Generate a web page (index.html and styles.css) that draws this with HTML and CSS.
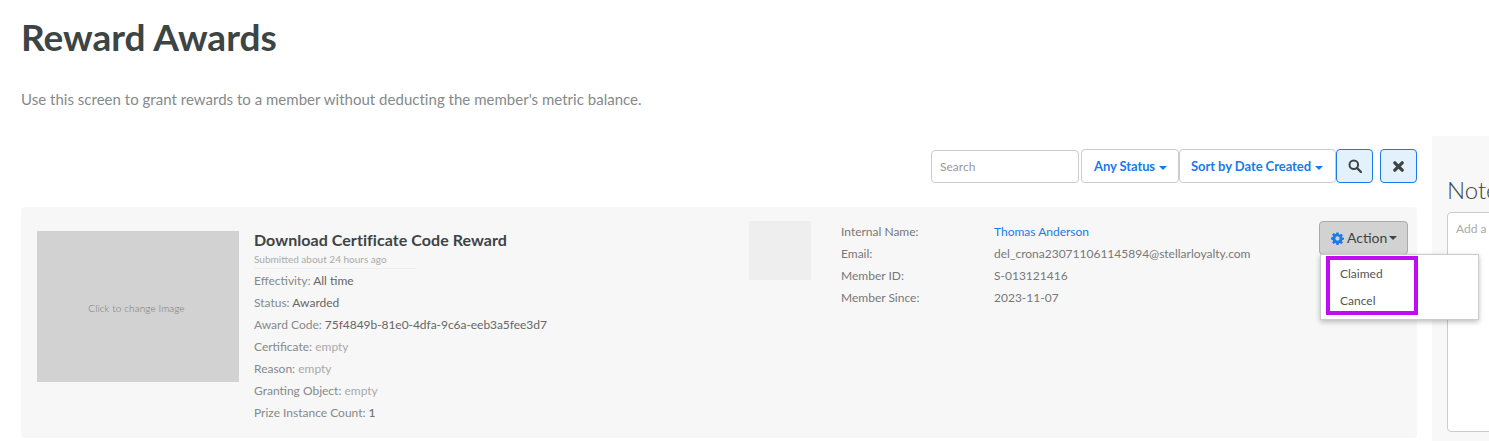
FILE: index.html
```html
<!DOCTYPE html>
<html lang="en">
<head>
    <meta charset="UTF-8">
    <title>Reward Awards</title>
    <link rel="stylesheet" href="styles.css">
</head>
<body>
    <h1>Reward Awards</h1>
    <p class="intro">Use this screen to grant rewards to a member without deducting the member's metric balance.</p>

    <div class="layout">
        <div class="main">
            <div class="toolbar">
                <input class="search" type="text" placeholder="Search">
                <button class="filter status-filter">Any Status<span class="caret"></span></button>
                <button class="filter sort-filter">Sort by Date Created<span class="caret"></span></button>
                <button class="icon-btn search-btn" aria-label="Search">
                    <svg width="14" height="14" viewBox="0 0 14 14"><circle cx="5.8" cy="5.8" r="4.3" fill="none" stroke="#3d4444" stroke-width="2"/><path d="M9 9l4 4" stroke="#3d4444" stroke-width="2.4" stroke-linecap="round"/></svg>
                </button>
                <button class="icon-btn" aria-label="Clear">
                    <svg width="11" height="11" viewBox="0 0 12 12"><path d="M2 2l8 8M10 2l-8 8" stroke="#3d4444" stroke-width="3.600" stroke-linecap="round"/></svg>
                </button>
            </div>

            <div class="card">
                <div class="image-box">Click to change Image</div>
                <div class="reward">
                    <h3>Download Certificate Code Reward</h3>
                    <div class="submitted">Submitted about 24 hours ago</div>
                    <div class="row">Effectivity: <b>All time</b></div>
                    <div class="row">Status: <b>Awarded</b></div>
                    <div class="row">Award Code: <b class="code">75f4849b-81e0-4dfa-9c6a-eeb3a5fee3d7</b></div>
                    <div class="row">Certificate: <i>empty</i></div>
                    <div class="row">Reason: <i>empty</i></div>
                    <div class="row">Granting Object: <i>empty</i></div>
                    <div class="row">Prize Instance Count: <b>1</b></div>
                </div>
                <div class="avatar"></div>
                <div class="member">
                    <span>Internal Name:</span><a href="#">Thomas Anderson</a>
                    <span>Email:</span><span>del_crona230711061145894@stellarloyalty.com</span>
                    <span>Member ID:</span><span>S-013121416</span>
                    <span>Member Since:</span><span>2023-11-07</span>
                </div>
                <div class="action">
                    <button class="action-btn">
                        <svg width="13" height="13" viewBox="0 0 24 24"><path fill="#1a7ae8" fill-rule="evenodd" d="M10 1h4l.6 3.200 1.900.8 2.700-1.900 2.800 2.800-1.900 2.700.8 1.900L24 10v4l-3.100.6-.8 1.900 1.900 2.700-2.800 2.800-2.700-1.900-1.900.8L14 24h-4l-.6-3.100-1.900-.8-2.700 1.900-2.800-2.800 1.900-2.700-.8-1.900L0 14v-4l3.100-.6.8-1.900L2 4.800 4.800 2l2.700 1.900 1.900-.8zM12 8a4 4 0 1 0 0 8 4 4 0 0 0 0-8z"/></svg>
                        Action<span class="caret"></span>
                    </button>
                    <ul class="menu">
                        <li>Claimed</li>
                        <li>Cancel</li>
                    </ul>
                    <div class="highlight"></div>
                </div>
            </div>
        </div>

        <div class="notes">
            <h2>Notes</h2>
            <textarea placeholder="Add a comment"></textarea>
        </div>
    </div>
</body>
</html>
```

FILE: styles.css
```css
* {
    box-sizing: border-box;
}
html, body {
    height: 441px;
    overflow: hidden;
}
body {
    margin: 0;
    padding: 0 0 0 21px;
    font-family: Lato, sans-serif;
    font-size: 13px;
    color: #777;
    background-color: #fff;
}
h1 {
    margin: 0;
    padding-top: 15px;
    height: 85px;
    font-size: 37px;
    line-height: 44px;
    font-weight: 700;
    color: #3d4444;
}
.intro {
    margin: 0;
    height: 51px;
    padding-top: 5px;
    font-size: 15px;
    line-height: 18px;
    letter-spacing: 0.02px;
    color: #858a8a;
}
.layout {
    display: flex;
    gap: 15px;
    width: 1600px;
}
.main {
    width: 1396px;
    flex: none;
}
.toolbar {
    display: flex;
    justify-content: flex-end;
    align-items: center;
    height: 71px;
    padding-bottom: 11px;
}
.search {
    width: 148px;
    height: 33px;
    margin-right: 2px;
    padding: 0 8px;
    font-family: inherit;
    font-size: 12px;
    border: 1px solid #ccc;
    border-radius: 4px;
}
.search::placeholder {
    color: #999;
}
.filter {
    height: 34px;
    padding: 0 12px;
    font-family: inherit;
    font-size: 13px;
    font-weight: 700;
    letter-spacing: -0.1px;
    color: #1a7ae8;
    background-color: #fff;
    border: 1px solid #ccc;
    border-radius: 4px;
}
.status-filter {
    padding-right: 11px;
}
.sort-filter {
    padding: 0 12px 0 11px;
    letter-spacing: -0.06px;
}
.caret {
    display: inline-block;
    margin-left: 4px;
    vertical-align: middle;
    border-top: 4px solid;
    border-left: 4px solid transparent;
    border-right: 4px solid transparent;
}
.icon-btn {
    display: flex;
    align-items: center;
    justify-content: center;
    width: 37px;
    height: 34px;
    padding: 0;
    background-color: #e3f1fd;
    border: 1px solid #1a7ae8;
    border-radius: 4px;
}
.search-btn {
    margin-right: 7px;
}
.card {
    display: flex;
    position: relative;
    height: 231px;
    background-color: #f7f7f7;
    border-radius: 4px;
}
.image-box {
    display: flex;
    align-items: center;
    justify-content: center;
    flex: none;
    width: 202px;
    height: 151px;
    margin: 24px 15px 0 16px;
    padding: 2px 3px 0 0;
    font-size: 10px;
    font-weight: 300;
    letter-spacing: 0.1px;
    color: #777;
    background-color: #d2d2d2;
}
.reward {
    flex: none;
    width: 495px;
    padding-top: 23px;
}
.reward h3 {
    margin: 0;
    font-size: 16px;
    line-height: 20px;
    letter-spacing: 0.06px;
    font-weight: 700;
    color: #3d4444;
}
.submitted {
    width: 162px;
    height: 19px;
    margin-bottom: 1px;
    font-size: 10px;
    line-height: 18px;
    color: #aaa;
    border-bottom: 1px solid #eee;
}
.row {
    height: 22px;
    font-size: 12px;
    line-height: 22px;
    color: #858a8a;
}
.row b {
    font-weight: 400;
    color: #666;
}
.row .code {
    letter-spacing: -0.05px;
}
.row i {
    font-style: normal;
    color: #aaa;
}
.avatar {
    flex: none;
    width: 62px;
    height: 59px;
    margin: 14px 30px 0 0;
    background-color: #eee;
}
.member {
    display: grid;
    grid-template-columns: 153px auto;
    grid-auto-rows: 22px;
    align-content: start;
    padding-top: 14px;
    font-size: 12px;
    line-height: 22px;
    color: #777;
}
.member a {
    color: #1a7ae8;
    text-decoration: none;
}
.action {
    position: absolute;
    top: 14px;
    left: 1298px;
}
.action-btn {
    display: flex;
    align-items: center;
    gap: 3px;
    width: 89px;
    height: 34px;
    padding: 0 0 2px 11px;
    font-family: inherit;
    font-size: 14px;
    color: #3d4444;
    background-color: #d2d2d2;
    border: 1px solid #aaa;
    border-radius: 4px;
}
.action-btn svg {
    margin-top: 2px;
}
.action-btn .caret {
    margin-left: -1px;
    margin-top: 2px;
}
.menu {
    position: absolute;
    top: 33px;
    left: 1px;
    width: 159px;
    height: 66px;
    margin: 0;
    padding: 5px 0 0;
    list-style: none;
    background-color: #fff;
    border: 1px solid #ccc;
    box-shadow: 0 2px 5px rgba(0, 0, 0, 0.25);
}
.menu li {
    height: 27px;
    padding-left: 19px;
    font-size: 12px;
    line-height: 27px;
    color: #555;
}
.highlight {
    position: absolute;
    top: 35px;
    left: 7px;
    width: 92px;
    height: 59px;
    border: 4px solid #c10bf5;
}
.notes {
    width: 300px;
    height: 310px;
    padding: 40px 15px 0;
    background-color: #f8f8f8;
}
.notes h2 {
    margin: 0 0 8px;
    font-size: 24px;
    line-height: 28px;
    font-weight: 300;
    color: #3d4444;
}
.notes textarea {
    display: block;
    width: 100%;
    height: 220px;
    padding: 8px;
    font-family: inherit;
    font-size: 12px;
    background-color: #fff;
    border: 1px solid #ccc;
    border-radius: 4px;
    resize: none;
}
.notes textarea::placeholder {
    color: #aaa;
}
```
